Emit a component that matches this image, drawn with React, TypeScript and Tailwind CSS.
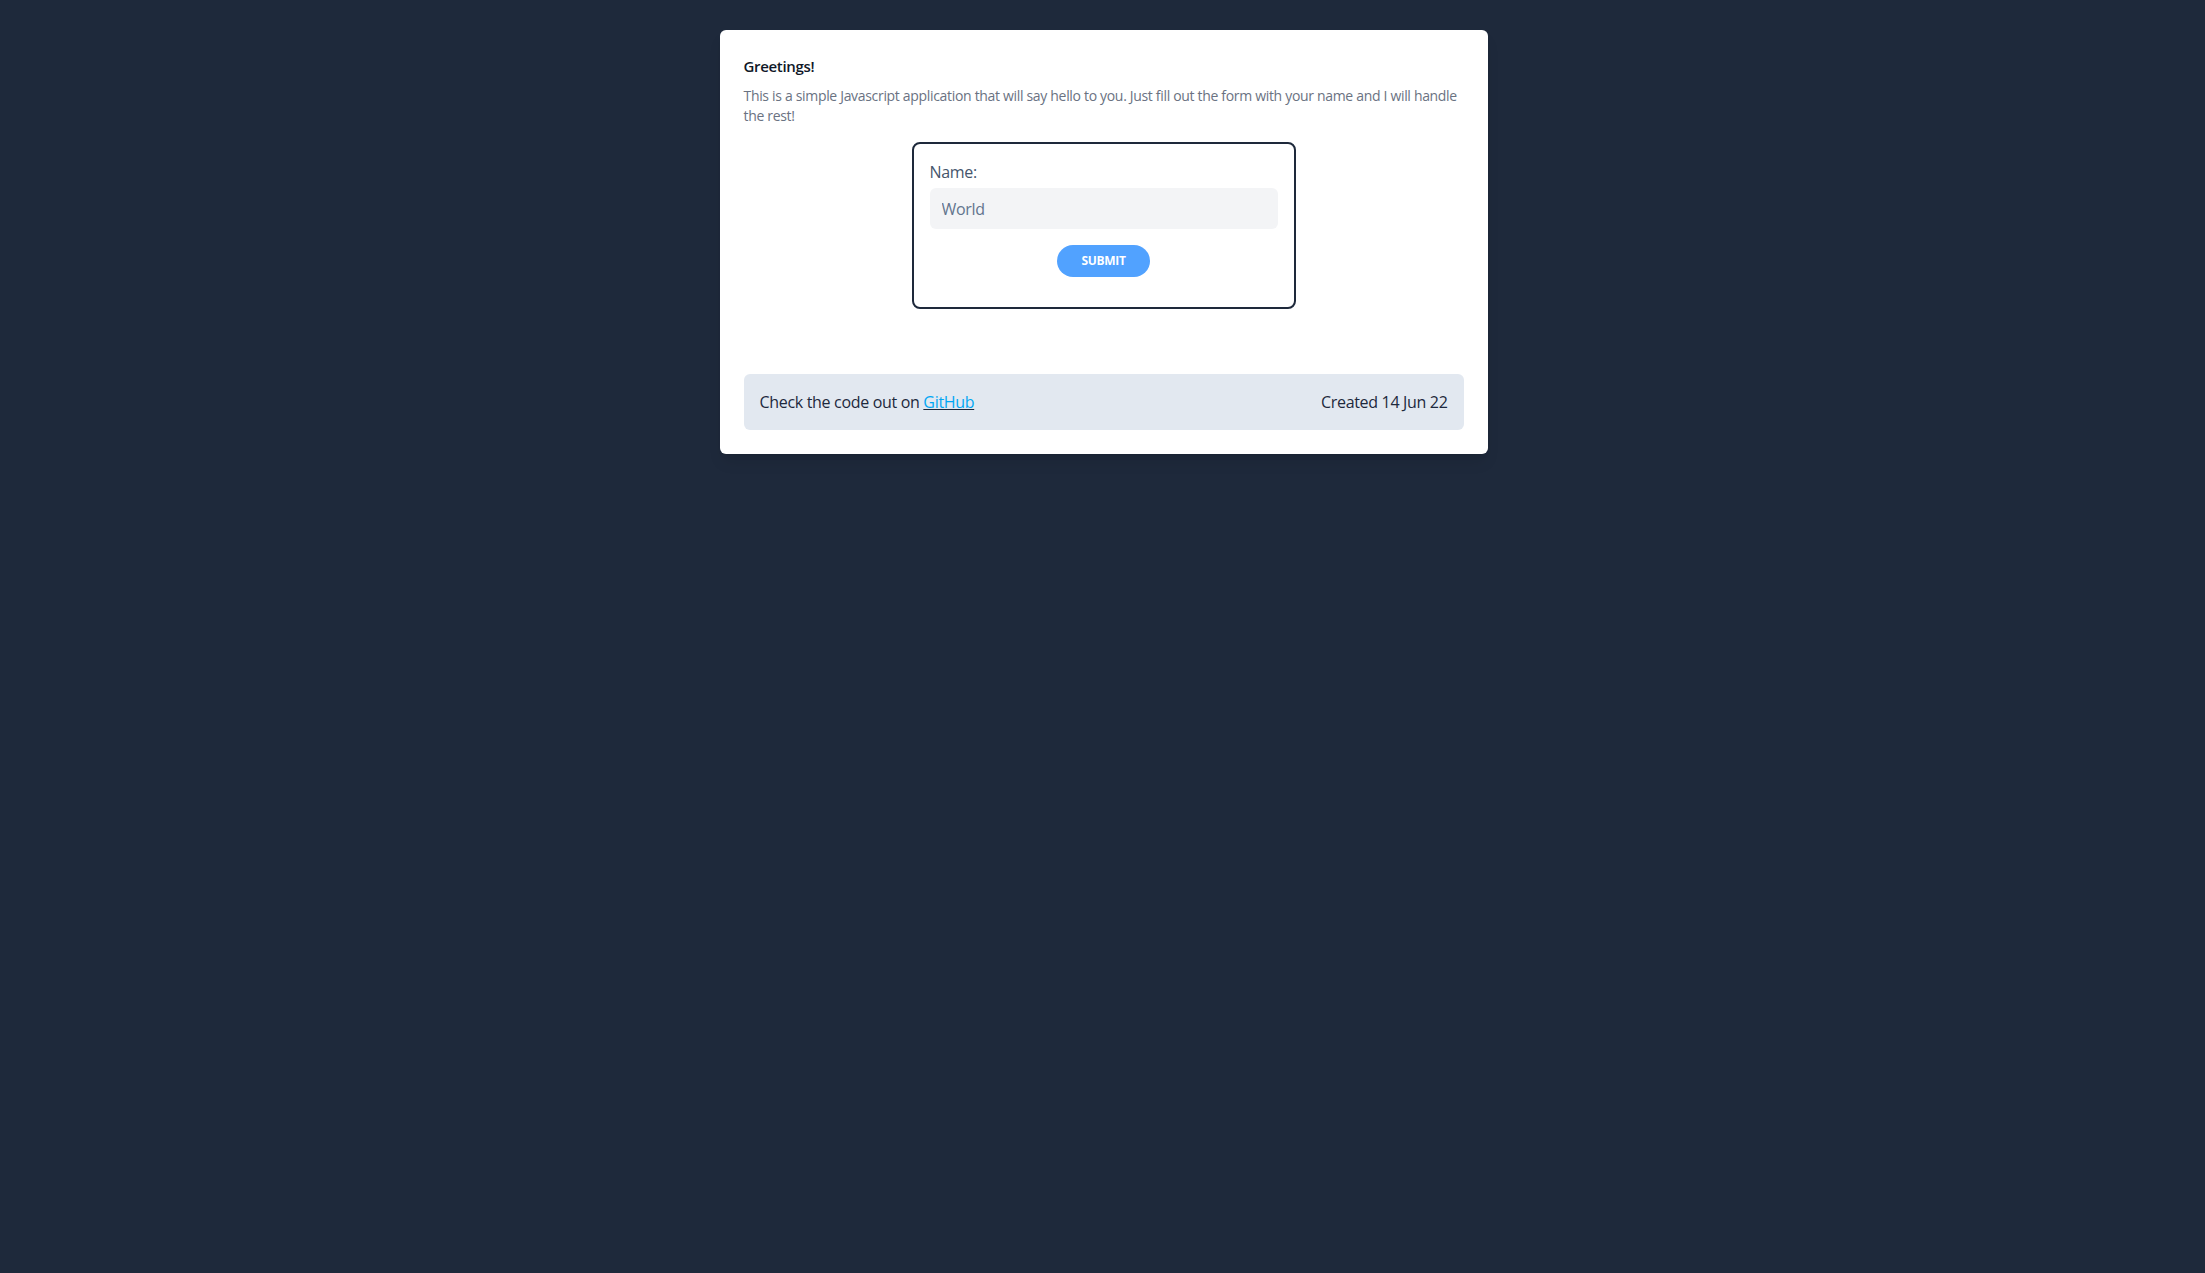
import { useState } from 'react';

export default function App() {
    const [name, setName] = useState('');

    return (
        <div className="min-h-screen bg-[#1e293b] pt-[30px] tracking-[-0.02em]" style={{ fontFamily: '"Open Sans", "Noto Sans", sans-serif' }}>
            <div className="mx-auto w-[768px] translate-x-[1px] rounded-md bg-white p-6 shadow-lg">
                <h1 className="text-[15px] font-semibold leading-6 text-gray-900">Greetings!</h1>
                <p className="mt-2 text-sm leading-5 text-gray-500">
                    This is a simple Javascript application that will say hello to you. Just fill out the form with your name and I will handle the rest!
                </p>

                {/* Form */}
                <form
                    className="mx-auto mt-4 w-96 rounded-lg border-2 border-[#1e293b] px-4 pt-4 pb-[30px]"
                    onSubmit={(e) => e.preventDefault()}
                >
                    <label className="block text-base leading-6 text-slate-600">Name:</label>
                    <input
                        value={name}
                        onChange={(e) => setName(e.target.value)}
                        placeholder="World"
                        className="mt-1 block h-[41px] w-full rounded-md bg-gray-100 px-3 text-base text-slate-600 placeholder:text-slate-500 outline-none"
                    />
                    <div className="mt-4 flex justify-center">
                        <button type="submit" className="rounded-full bg-blue-400 px-6 py-2 text-xs leading-4 font-bold text-white uppercase">
                            Submit
                        </button>
                    </div>
                </form>

                {/* Footer */}
                <div className="mt-[65px] flex items-center justify-between rounded-md bg-slate-200 px-4 py-4 text-base leading-6 text-slate-800">
                    <span>
                        Check the code out on{' '}
                        <a href="#" className="text-sky-500 underline decoration-slate-800">GitHub</a>
                    </span>
                    <span>Created 14 Jun 22</span>
                </div>
            </div>
        </div>
    );
}
